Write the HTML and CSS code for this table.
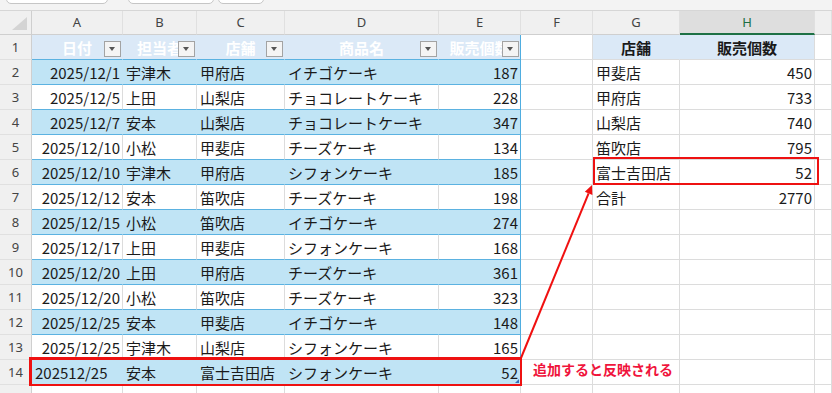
FILE: index.html
```html
<!DOCTYPE html>
<html lang="ja">
<head>
<meta charset="utf-8">
<link rel="stylesheet" href="styles.css">
</head>
<body>
<div class="sheet">
  <div class="strip">
    <div class="tab tab1"></div>
    <div class="tab tab2"></div>
    <div class="tab tab3"></div>
  </div>

  <div class="row colhead">
    <div class="c corner"><span class="tri"></span></div>
    <div class="c hd">A</div><div class="c hd">B</div><div class="c hd">C</div><div class="c hd">D</div><div class="c hd">E</div><div class="c hd">F</div><div class="c hd">G</div><div class="c hd sel">H</div><div class="c hd"></div>
  </div>

  <div class="row">
    <div class="c rn">1</div>
    <div class="c th">日付<span class="fb"></span></div>
    <div class="c th">担当者<span class="fb"></span></div>
    <div class="c th">店舗<span class="fb"></span></div>
    <div class="c th">商品名<span class="fb"></span></div>
    <div class="c th last">販売個数<span class="fb"></span></div>
    <div class="c"></div>
    <div class="c sh">店舗</div>
    <div class="c sh">販売個数</div>
    <div class="c"></div>
  </div>

  <div class="row">
    <div class="c rn">2</div>
    <div class="c t band r">2025/12/1</div><div class="c t band">宇津木</div><div class="c t band">甲府店</div><div class="c t band">イチゴケーキ</div><div class="c t band r last">187</div>
    <div class="c"></div><div class="c">甲斐店</div><div class="c r">450</div><div class="c"></div>
  </div>
  <div class="row">
    <div class="c rn">3</div>
    <div class="c t r">2025/12/5</div><div class="c t">上田</div><div class="c t">山梨店</div><div class="c t">チョコレートケーキ</div><div class="c t r last">228</div>
    <div class="c"></div><div class="c">甲府店</div><div class="c r">733</div><div class="c"></div>
  </div>
  <div class="row">
    <div class="c rn">4</div>
    <div class="c t band r">2025/12/7</div><div class="c t band">安本</div><div class="c t band">山梨店</div><div class="c t band">チョコレートケーキ</div><div class="c t band r last">347</div>
    <div class="c"></div><div class="c">山梨店</div><div class="c r">740</div><div class="c"></div>
  </div>
  <div class="row">
    <div class="c rn">5</div>
    <div class="c t r">2025/12/10</div><div class="c t">小松</div><div class="c t">甲斐店</div><div class="c t">チーズケーキ</div><div class="c t r last">134</div>
    <div class="c"></div><div class="c">笛吹店</div><div class="c r">795</div><div class="c"></div>
  </div>
  <div class="row">
    <div class="c rn">6</div>
    <div class="c t band r">2025/12/10</div><div class="c t band">宇津木</div><div class="c t band">甲府店</div><div class="c t band">シフォンケーキ</div><div class="c t band r last">185</div>
    <div class="c"></div><div class="c">富士吉田店</div><div class="c r">52</div><div class="c"></div>
  </div>
  <div class="row">
    <div class="c rn">7</div>
    <div class="c t r">2025/12/12</div><div class="c t">安本</div><div class="c t">笛吹店</div><div class="c t">チーズケーキ</div><div class="c t r last">198</div>
    <div class="c"></div><div class="c">合計</div><div class="c r">2770</div><div class="c"></div>
  </div>
  <div class="row">
    <div class="c rn">8</div>
    <div class="c t band r">2025/12/15</div><div class="c t band">小松</div><div class="c t band">笛吹店</div><div class="c t band">イチゴケーキ</div><div class="c t band r last">274</div>
    <div class="c"></div><div class="c"></div><div class="c"></div><div class="c"></div>
  </div>
  <div class="row">
    <div class="c rn">9</div>
    <div class="c t r">2025/12/17</div><div class="c t">上田</div><div class="c t">甲斐店</div><div class="c t">シフォンケーキ</div><div class="c t r last">168</div>
    <div class="c"></div><div class="c"></div><div class="c"></div><div class="c"></div>
  </div>
  <div class="row">
    <div class="c rn">10</div>
    <div class="c t band r">2025/12/20</div><div class="c t band">上田</div><div class="c t band">甲府店</div><div class="c t band">チーズケーキ</div><div class="c t band r last">361</div>
    <div class="c"></div><div class="c"></div><div class="c"></div><div class="c"></div>
  </div>
  <div class="row">
    <div class="c rn">11</div>
    <div class="c t r">2025/12/20</div><div class="c t">小松</div><div class="c t">笛吹店</div><div class="c t">チーズケーキ</div><div class="c t r last">323</div>
    <div class="c"></div><div class="c"></div><div class="c"></div><div class="c"></div>
  </div>
  <div class="row">
    <div class="c rn">12</div>
    <div class="c t band r">2025/12/25</div><div class="c t band">安本</div><div class="c t band">甲斐店</div><div class="c t band">イチゴケーキ</div><div class="c t band r last">148</div>
    <div class="c"></div><div class="c"></div><div class="c"></div><div class="c"></div>
  </div>
  <div class="row">
    <div class="c rn">13</div>
    <div class="c t r">2025/12/25</div><div class="c t">宇津木</div><div class="c t">山梨店</div><div class="c t">シフォンケーキ</div><div class="c t r last">165</div>
    <div class="c"></div><div class="c"></div><div class="c"></div><div class="c"></div>
  </div>
  <div class="row">
    <div class="c rn">14</div>
    <div class="c t band">202512/25</div><div class="c t band">安本</div><div class="c t band">富士吉田店</div><div class="c t band">シフォンケーキ</div><div class="c t band r last handle">52</div>
    <div class="c"></div><div class="c"></div><div class="c"></div><div class="c"></div>
  </div>
  <div class="row">
    <div class="c rn"></div>
    <div class="c"></div><div class="c"></div><div class="c"></div><div class="c"></div><div class="c"></div>
    <div class="c"></div><div class="c"></div><div class="c"></div><div class="c"></div>
  </div>

  <div class="box box-row"></div>
  <div class="box box-sum"></div>
  <div class="note">追加すると反映される</div>
  <svg class="arrow" width="832" height="393" viewBox="0 0 832 393">
    <line x1="521" y1="358" x2="588.6" y2="193.3" stroke="#f01010" stroke-width="2"/>
    <polygon points="592,185 592.4,194.9 584.8,191.8" fill="#f01010"/>
  </svg>
</div>
</body>
</html>
```

FILE: styles.css
```css
html, body {
  margin: 0;
  padding: 0;
  background: #ffffff;
}
body {
  width: 832px;
  height: 393px;
  overflow: hidden;
  font-family: "Noto Sans CJK JP", "Noto Sans", sans-serif;
  font-size: 15px;
  color: #1a1a1a;
}
.sheet {
  position: relative;
  width: 832px;
  height: 393px;
  overflow: hidden;
}
.strip {
  height: 10px;
  background: #f3f3f3;
  border-bottom: 1px solid #d6d6d6;
  position: relative;
}
.tab {
  position: absolute;
  top: -4px;
  height: 6px;
  background: #ffffff;
  border: 1px solid #c6c6c6;
  border-radius: 0 0 5px 5px;
}
.tab1 { left: 6px; width: 100px; }
.tab2 { left: 128px; width: 84px; }
.tab3 { left: 218px; width: 44px; }

.row {
  display: grid;
  grid-template-columns: 32px 91px 74px 88px 154px 82px 72px 87px 135px 1fr;
  height: 25px;
}
.row.colhead { height: 24px; }

.c {
  box-sizing: border-box;
  border-right: 1px solid #dcdcdc;
  border-bottom: 1px solid #dcdcdc;
  display: flex;
  align-items: center;
  padding: 0 3px;
  white-space: nowrap;
  overflow: hidden;
  line-height: 1;
  position: relative;
}
.c.r { justify-content: flex-end; padding-right: 2px; }

.hd, .corner {
  background: #f0f0f0;
  justify-content: center;
  font-family: "Noto Sans", "Noto Sans CJK JP", sans-serif;
  font-size: 13px;
  color: #444444;
  border-right-color: #e0e0e0;
  border-bottom-color: #cfcfcf;
}
.hd.sel {
  background: #dedede;
  color: #1d6f42;
  border-bottom: 2px solid #1e7145;
}
.corner { border-right-color: #cfcfcf; }
.tri {
  position: absolute;
  right: 4px;
  bottom: 4px;
  width: 0;
  height: 0;
  border-left: 15px solid transparent;
  border-bottom: 13px solid #d4d4d4;
}
.rn {
  background: #f0f0f0;
  justify-content: center;
  font-family: "Noto Sans", "Noto Sans CJK JP", sans-serif;
  font-size: 13px;
  color: #444444;
  border-right-color: #cfcfcf;
  border-bottom-color: #e0e0e0;
}

.th {
  background: #dbe9f7;
  border-right-color: #dbe9f7;
  border-bottom-color: #5bb2e1;
  color: #ffffff;
  font-weight: bold;
  justify-content: center;
}
.t { border-bottom-color: #5bb2e1; }
.t.band {
  background: #c0e4f5;
  border-right-color: #c0e4f5;
}
.last, .t.band.last, .th.last { border-right-color: #4fade0; }

.fb {
  position: absolute;
  right: 1px;
  top: 6px;
  width: 17px;
  height: 16px;
  box-sizing: border-box;
  border: 1px solid #a3a3a3;
  background: #f4f4f4;
}
.fb::after {
  content: "";
  position: absolute;
  left: 4px;
  top: 5px;
  border-left: 3.5px solid transparent;
  border-right: 3.5px solid transparent;
  border-top: 4px solid #555555;
}

.sh {
  background: #dbe9f7;
  border-right-color: #dbe9f7;
  border-bottom-color: #dcdcdc;
  font-weight: bold;
  justify-content: center;
  color: #1a1a1a;
}
.sh + .sh { border-right-color: #dcdcdc; }

.handle::after {
  content: "";
  position: absolute;
  right: 1px;
  bottom: 1px;
  border-left: 4px solid transparent;
  border-bottom: 4px solid #3a6fb8;
}

.box {
  position: absolute;
  box-sizing: border-box;
  border: 2px solid #ee1111;
  pointer-events: none;
}
.box-row {
  left: 29px;
  top: 357px;
  width: 493px;
  height: 29px;
  border-width: 3px 2px 2px 3px;
}
.box-sum {
  left: 593px;
  top: 157px;
  width: 226px;
  height: 28px;
}
.note {
  position: absolute;
  left: 533px;
  top: 360px;
  font-size: 14px;
  font-weight: bold;
  color: #f0143c;
  line-height: 18px;
  white-space: nowrap;
}
.arrow {
  position: absolute;
  left: 0;
  top: 0;
  pointer-events: none;
}
```
